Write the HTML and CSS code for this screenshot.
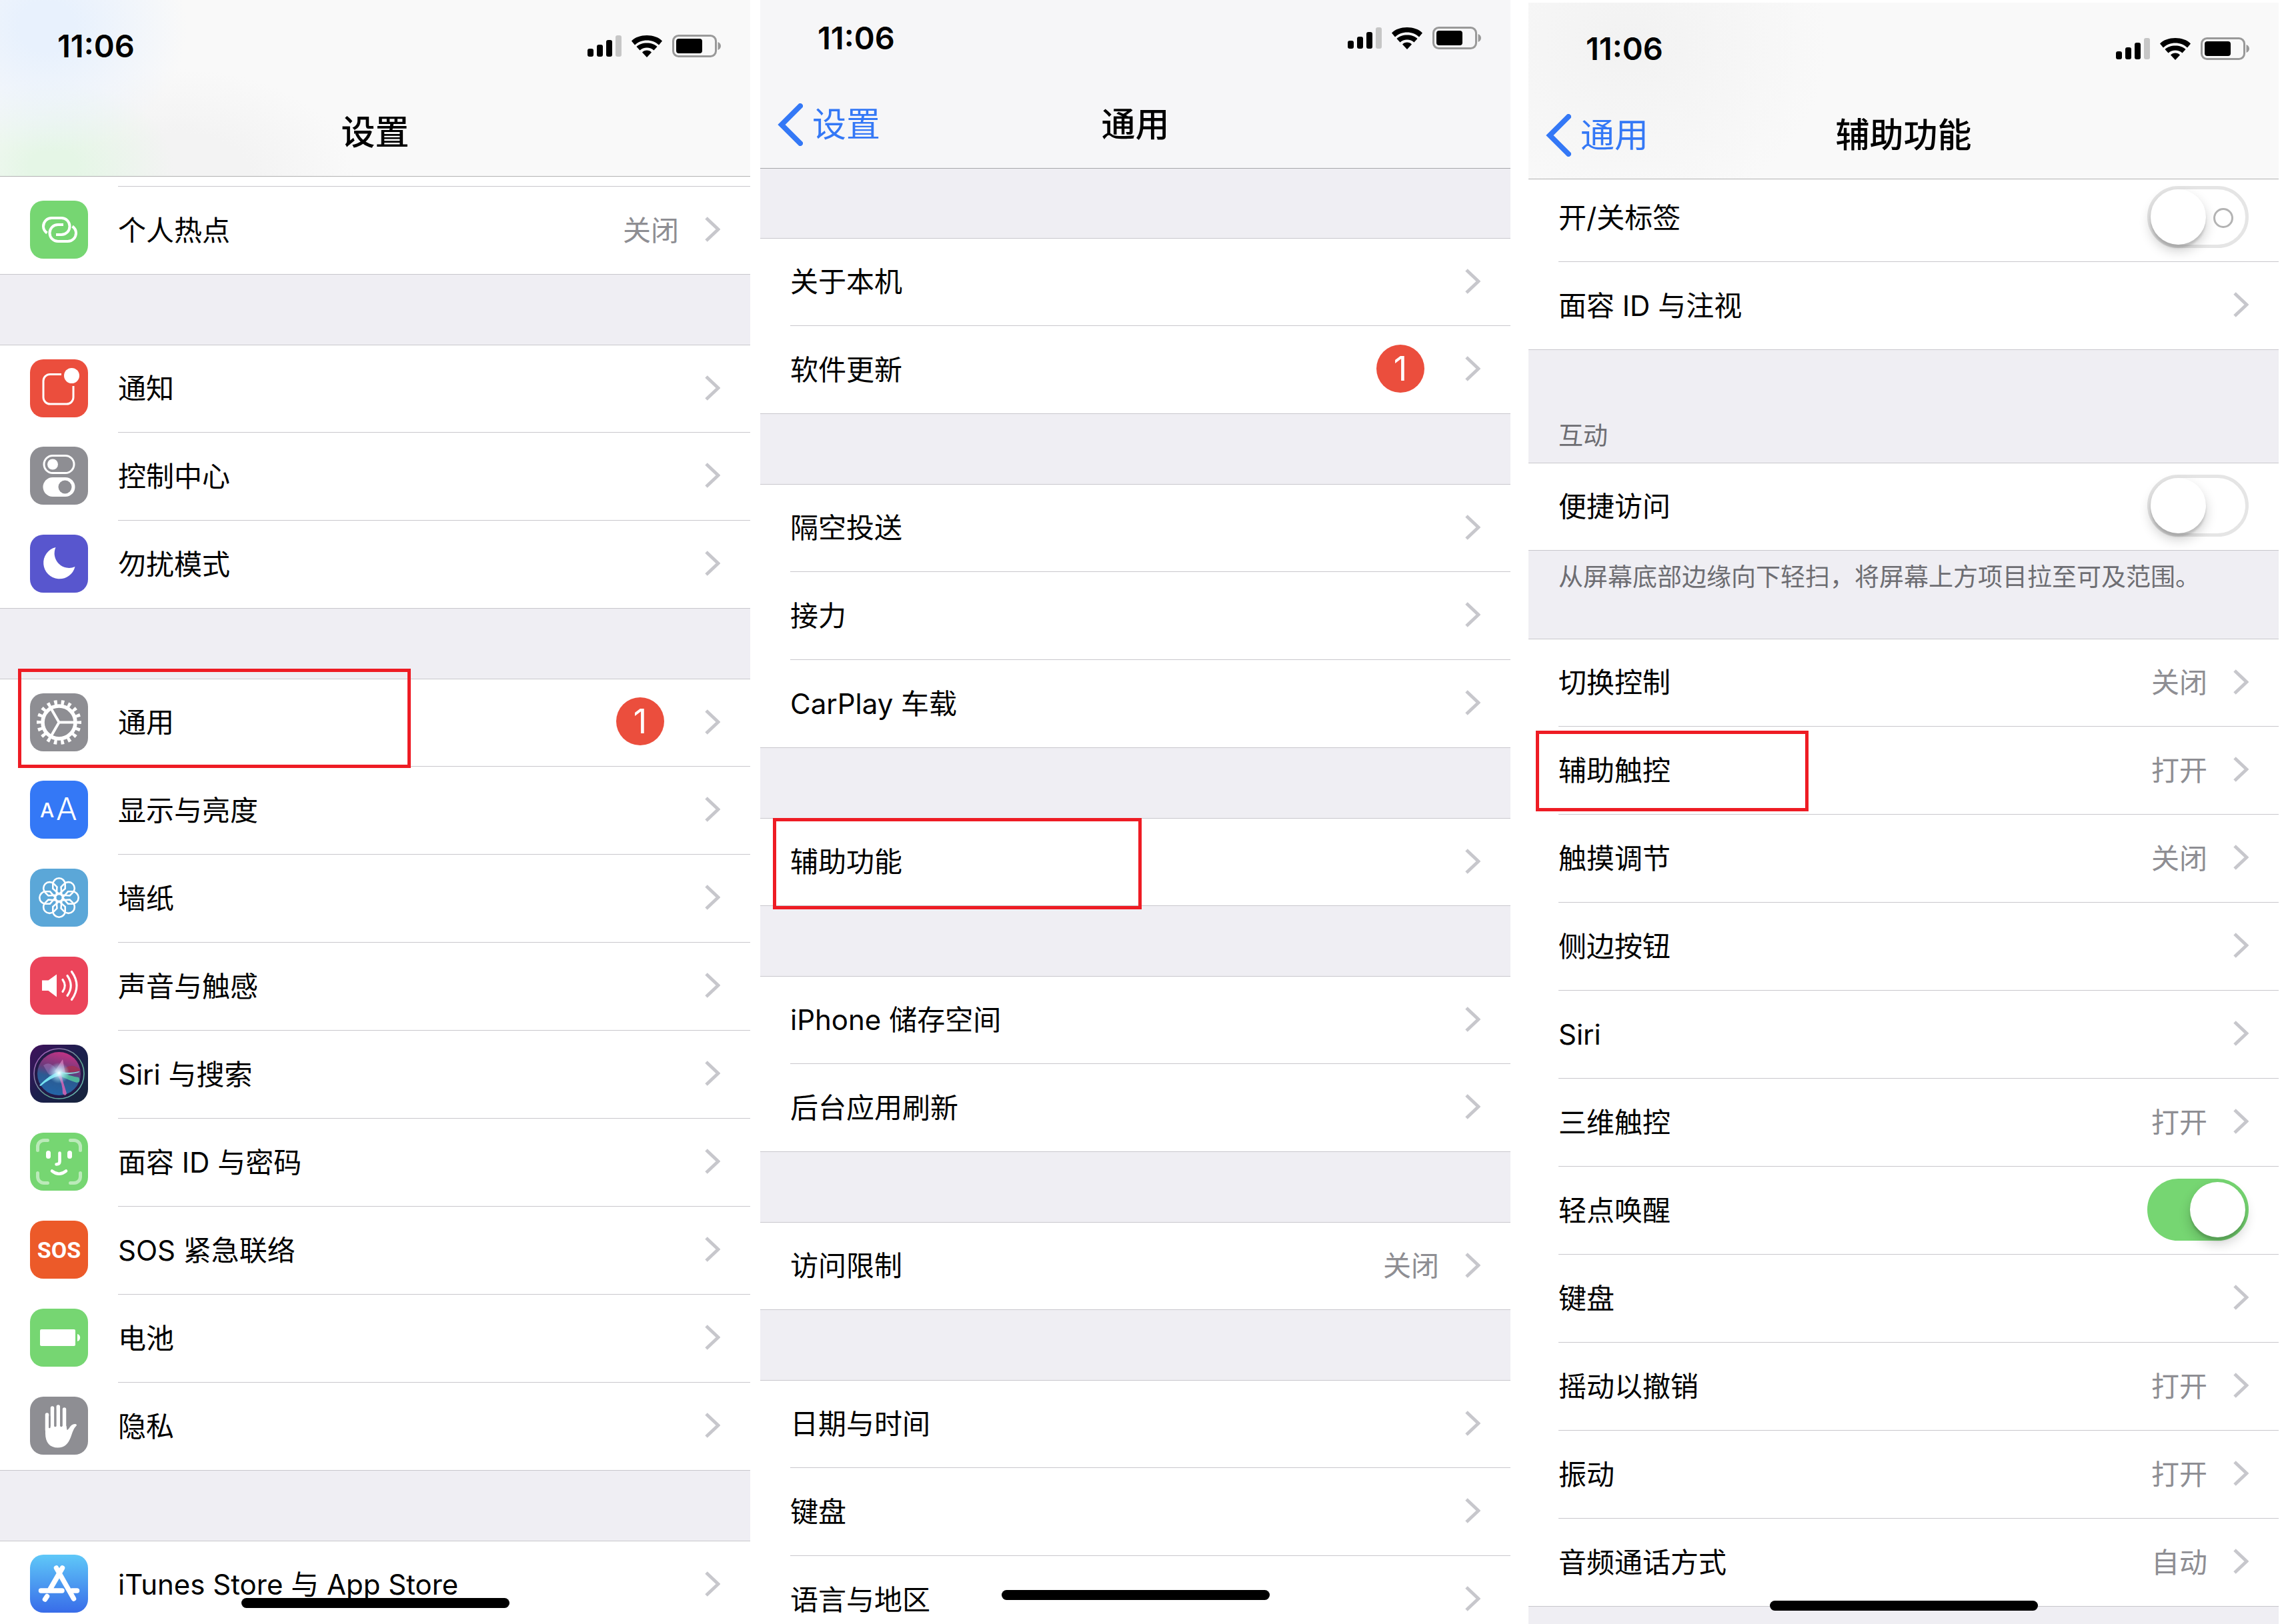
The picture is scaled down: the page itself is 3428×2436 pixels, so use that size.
FILE: index.html
```html
<!DOCTYPE html>
<html lang="zh-CN">
<head>
    <meta charset="UTF-8">
    <meta name="viewport" content="width=device-width, initial-scale=1.0">
    <title>设置 - 辅助触控</title>
    <link rel="stylesheet" href="styles.css">
</head>
<body>
    <!-- shared symbols -->
    <svg class="defs" aria-hidden="true">
        <symbol id="chevron" viewBox="0 0 24 38">
            <path d="M3 2l18 17L3 36" fill="none" stroke="#c7c7cc" stroke-width="5"/>
        </symbol>
        <symbol id="back" viewBox="0 0 38 64">
            <path d="M34 4L6 32l28 28" fill="none" stroke="#3478f6" stroke-width="8" stroke-linecap="round"/>
        </symbol>
        <symbol id="status" viewBox="0 0 200 34">
            <rect x="0" y="21" width="9" height="12" rx="3"/>
            <rect x="14" y="15" width="9" height="18" rx="3"/>
            <rect x="28" y="8" width="9" height="25" rx="3"/>
            <rect x="42" y="1" width="9" height="32" rx="3" fill="#c6c6c6"/>
            <path d="M66 9.500C76 -2 102 -2 112 9.500L107 15.500C98 6 80 6 71 15.500Z"/>
            <path d="M73.500 18C80 10.500 98 10.500 104.500 18L99.500 23.500C94 18 84 18 78.500 23.500Z"/>
            <path d="M82 26.500C85 22.500 93 22.500 96 26.500L89 34Z"/>
            <rect x="128.500" y="1.500" width="64" height="31" rx="8" fill="none" stroke="#999" stroke-width="3"/>
            <rect x="133" y="6" width="39" height="22" rx="4"/>
            <path d="M195.500 11c6 2 6 10 0 12z" fill="#999"/>
        </symbol>
    </svg>

    <main class="page">
        <!-- 设置 -->
        <section class="screen">
            <header class="nav nav-home">
                <div class="status"><span class="time">11:06</span><svg class="status-icons"><use href="#status"/></svg></div>
                <div class="title-bar"><h1>设置</h1></div>
            </header>
            <div class="group icons cut">
                <div class="row peek"><span class="body"></span></div>
                <a class="row" href="#">
                    <svg class="icon" viewBox="0 0 87 87"><rect width="87" height="87" rx="20" fill="#76d672"/>
                        <g fill="none" stroke="#fff" stroke-width="4">
                            <path id="loop" d="M25.500 48.500C22 46 20 42.500 20 38.500 20 31.500 25.500 26 32.500 26H47c7 0 12.500 5.500 12.500 12.500S54 51 47 51h-8"/>
                            <use href="#loop" transform="rotate(180 44.500 43.500)"/>
                        </g></svg>
                    <span class="body"><span class="label">个人热点</span><span class="value">关闭</span><svg class="chevron"><use href="#chevron"/></svg></span>
                </a>
            </div>
            <div class="group icons">
                <a class="row" href="#">
                    <svg class="icon" viewBox="0 0 87 87"><rect width="87" height="87" rx="20" fill="#eb4e3d"/>
                        <path d="M47 22.500H30a10 10 0 0 0-10 10V57a10 10 0 0 0 10 10h25a10 10 0 0 0 10-10V40" fill="none" stroke="#fff" stroke-width="3"/>
                        <circle cx="62.500" cy="24.500" r="11.500" fill="#fff"/></svg>
                    <span class="body"><span class="label">通知</span><svg class="chevron"><use href="#chevron"/></svg></span>
                </a>
                <a class="row" href="#">
                    <svg class="icon" viewBox="0 0 87 87"><rect width="87" height="87" rx="20" fill="#8e8e93"/>
                        <rect x="21" y="13.500" width="45" height="26" rx="13" fill="none" stroke="#fff" stroke-width="3"/>
                        <circle cx="34" cy="26.500" r="8" fill="#fff"/>
                        <rect x="19.500" y="46" width="48" height="29" rx="14.500" fill="#fff"/>
                        <circle cx="52.500" cy="60.500" r="10" fill="#8e8e93"/></svg>
                    <span class="body"><span class="label">控制中心</span><svg class="chevron"><use href="#chevron"/></svg></span>
                </a>
                <a class="row" href="#">
                    <svg class="icon" viewBox="0 0 87 87"><rect width="87" height="87" rx="20" fill="#5856ce"/>
                        <path d="M38.500 19A24 24 0 1 0 67.500 48A22 22 0 0 1 38.500 19Z" fill="#fff"/></svg>
                    <span class="body"><span class="label">勿扰模式</span><svg class="chevron"><use href="#chevron"/></svg></span>
                </a>
            </div>
            <div class="group icons">
                <a class="row" href="#">
                    <span class="mark mark-settings"></span>
                    <svg class="icon" viewBox="0 0 87 87"><rect width="87" height="87" rx="20" fill="#8e8e93"/>
                        <g fill="none" stroke="#fff">
                            <circle cx="43.500" cy="43.500" r="30" stroke-width="7" stroke-dasharray="4.600 5.872" stroke-dashoffset="2.300"/>
                            <circle cx="43.500" cy="43.500" r="24.500" stroke-width="5.600"/>
                            <path d="M43.500 43.500H67M43.500 43.500L31.700 23.100M43.500 43.500L31.700 63.900" stroke-width="4"/>
                        </g></svg>
                    <span class="body"><span class="label">通用</span><span class="badge">1</span><svg class="chevron"><use href="#chevron"/></svg></span>
                </a>
                <a class="row" href="#">
                    <svg class="icon" viewBox="0 0 87 87"><rect width="87" height="87" rx="20" fill="#3478f6"/>
                        <text class="small-a" x="15" y="55">A</text><text class="big-a" x="39" y="59">A</text></svg>
                    <span class="body"><span class="label">显示与亮度</span><svg class="chevron"><use href="#chevron"/></svg></span>
                </a>
                <a class="row" href="#">
                    <svg class="icon" viewBox="0 0 87 87"><rect width="87" height="87" rx="20" fill="#5ba7d8"/>
                        <g fill="none" stroke="#fff" stroke-width="2.600">
                            <path id="petal" d="M43.500 38L34.300 30V23.500a9.200 9.200 0 0 1 18.400 0V30Z"/>
                            <use href="#petal" transform="rotate(45 43.500 43.500)"/>
                            <use href="#petal" transform="rotate(90 43.500 43.500)"/>
                            <use href="#petal" transform="rotate(135 43.500 43.500)"/>
                            <use href="#petal" transform="rotate(180 43.500 43.500)"/>
                            <use href="#petal" transform="rotate(225 43.500 43.500)"/>
                            <use href="#petal" transform="rotate(270 43.500 43.500)"/>
                            <use href="#petal" transform="rotate(315 43.500 43.500)"/>
                            <circle cx="43.500" cy="43.500" r="5.500"/>
                        </g></svg>
                    <span class="body"><span class="label">墙纸</span><svg class="chevron"><use href="#chevron"/></svg></span>
                </a>
                <a class="row" href="#">
                    <svg class="icon" viewBox="0 0 87 87"><rect width="87" height="87" rx="20" fill="#eb445a"/>
                        <path d="M18 35.500h9.500L40 26.500v34L27.500 51H18z" fill="#fff"/>
                        <path d="M49 34.500q6.500 9 0 18M56 28.500q10.500 15 0 30M62.500 22.500q15 21 0 42" fill="none" stroke="#fff" stroke-width="3.200" stroke-linecap="round"/></svg>
                    <span class="body"><span class="label">声音与触感</span><svg class="chevron"><use href="#chevron"/></svg></span>
                </a>
                <a class="row" href="#">
                    <svg class="icon" viewBox="0 0 87 87">
                        <defs>
                            <linearGradient id="siriBg" x1="0" y1="0" x2="1" y2="1"><stop offset="0" stop-color="#40115c"/><stop offset=".5" stop-color="#1b1f4d"/><stop offset="1" stop-color="#16243a"/></linearGradient>
                            <linearGradient id="siriOrb" x1=".6" y1="0" x2=".35" y2="1"><stop offset="0" stop-color="#c23384"/><stop offset=".4" stop-color="#6b3b7c"/><stop offset=".6" stop-color="#2b5a92"/><stop offset="1" stop-color="#2366a8"/></linearGradient>
                            <linearGradient id="siriRim" x1="0" y1="0" x2="1" y2="1"><stop offset="0" stop-color="#b04fc0"/><stop offset=".6" stop-color="#5fa68f"/><stop offset="1" stop-color="#6fc5c0"/></linearGradient>
                            <radialGradient id="siriGlow"><stop offset="0" stop-color="#fff"/><stop offset=".3" stop-color="#c8f4ff" stop-opacity=".8"/><stop offset="1" stop-color="#8fdcf5" stop-opacity="0"/></radialGradient>
                        </defs>
                        <rect width="87" height="87" rx="20" fill="url(#siriBg)"/>
                        <circle cx="43.500" cy="43.500" r="37.500" fill="#231a48" stroke="url(#siriRim)" stroke-width="1.600"/>
                        <circle cx="43.500" cy="43.500" r="32.500" fill="url(#siriOrb)"/>
                        <path d="M43 43Q60 24 75 37Q77 41 43 43Z" fill="#a92f4c" opacity=".7"/>
                        <path d="M20 31Q32 22 43 43Q30 48 27 43Z" fill="#9d7dc0" opacity=".5"/>
                        <path d="M37 40L49 22L53 43L45 46Z" fill="#e894cf" opacity=".6"/>
                        <path d="M43 40Q58 44 74 40Q76 42 60 44Q50 45 43 44Z" fill="#8fe6e0" opacity=".9"/>
                        <path d="M43 40Q62 48 73 49Q77 56 70 57Q60 54 43 46Z" fill="#52c7a0" opacity=".85"/>
                        <path d="M46 43Q50 57 55 73Q53 79 49 73Q49 58 41 45Z" fill="#d863b4" opacity=".85"/>
                        <path d="M14 61Q29 45 45 40L46 46Q30 50 16 62Z" fill="#77e3f0"/>
                        <circle cx="43.500" cy="42.500" r="16" fill="url(#siriGlow)"/>
                    </svg>
                    <span class="body"><span class="label">Siri 与搜索</span><svg class="chevron"><use href="#chevron"/></svg></span>
                </a>
                <a class="row" href="#">
                    <svg class="icon" viewBox="0 0 87 87"><rect width="87" height="87" rx="20" fill="#76d672"/>
                        <path d="M26.500 11.500H21a9.500 9.500 0 0 0-9.500 9.500v5.500M60.500 11.500H66a9.500 9.500 0 0 1 9.500 9.500v5.500M26.500 75.500H21a9.500 9.500 0 0 1-9.500-9.500v-5.500M60.500 75.500H66a9.500 9.500 0 0 0 9.500-9.500v-5.500" fill="none" stroke="#bbeab9" stroke-width="5" stroke-linecap="round"/>
                        <g fill="none" stroke="#fff" stroke-linecap="round">
                            <path d="M27.500 30.500v5M59.500 30.500v5" stroke-width="7"/>
                            <path d="M44.500 30.500V43q0 4.500-5 4.500M33 57.500q10.500 8.500 21 0" stroke-width="4.600"/>
                        </g></svg>
                    <span class="body"><span class="label">面容 ID 与密码</span><svg class="chevron"><use href="#chevron"/></svg></span>
                </a>
                <a class="row" href="#">
                    <svg class="icon" viewBox="0 0 87 87"><rect width="87" height="87" rx="20" fill="#ec5a29"/>
                        <text class="sos" x="43.500" y="56" text-anchor="middle">SOS</text></svg>
                    <span class="body"><span class="label">SOS 紧急联络</span><svg class="chevron"><use href="#chevron"/></svg></span>
                </a>
                <a class="row" href="#">
                    <svg class="icon" viewBox="0 0 87 87"><rect width="87" height="87" rx="20" fill="#76d672"/>
                        <rect x="15" y="31" width="53" height="25" rx="2" fill="#fff"/>
                        <path d="M71 38c5.500 1 5.500 10 0 11z" fill="#fff"/></svg>
                    <span class="body"><span class="label">电池</span><svg class="chevron"><use href="#chevron"/></svg></span>
                </a>
                <a class="row" href="#">
                    <svg class="icon" viewBox="0 0 87 87"><rect width="87" height="87" rx="20" fill="#8e8e93"/>
                        <path d="M23 45V55C23 69 30 76.500 41.500 76.500C52 76.500 57 71 61 61C64 53 65 48 70 43C70 40 64 40.500 61.500 43.500C59 46 57.500 50 55.500 50L54.500 44Z" fill="#fff"/>
                        <path d="M25.500 27v23M33.500 17v33M42.300 15v35M51.500 19v31" stroke="#fff" stroke-width="5.500" stroke-linecap="round"/>
                        <path d="M29.300 30v16M37.900 20v24M46.900 20v24" stroke="#8e8e93" stroke-width="2.600" stroke-linecap="round"/></svg>
                    <span class="body"><span class="label">隐私</span><svg class="chevron"><use href="#chevron"/></svg></span>
                </a>
            </div>
            <div class="group icons">
                <a class="row" href="#">
                    <svg class="icon" viewBox="0 0 87 87">
                        <defs><linearGradient id="store" x1="0" y1="0" x2="0" y2="1"><stop offset="0" stop-color="#5fc8f8"/><stop offset="1" stop-color="#386ce9"/></linearGradient></defs>
                        <rect width="87" height="87" rx="20" fill="url(#store)"/>
                        <g stroke="#fff" stroke-width="7.500" stroke-linecap="round">
                            <path d="M39.500 20L65.500 66M48.500 20L30 52M16.500 54H48M63 54h7.500M25.500 62.500l-3 4.500"/>
                        </g></svg>
                    <span class="body"><span class="label">iTunes Store 与 App Store</span><svg class="chevron"><use href="#chevron"/></svg></span>
                </a>
            </div>
            <span class="home-bar"></span>
        </section>

        <!-- 通用 -->
        <section class="screen screen-general">
            <header class="nav nav-general">
                <div class="status"><span class="time">11:06</span><svg class="status-icons"><use href="#status"/></svg></div>
                <div class="title-bar"><a class="back" href="#"><svg class="back-icon"><use href="#back"/></svg>设置</a><h1>通用</h1></div>
            </header>
            <div class="group">
                <a class="row" href="#"><span class="body"><span class="label">关于本机</span><svg class="chevron"><use href="#chevron"/></svg></span></a>
                <a class="row" href="#"><span class="body"><span class="label">软件更新</span><span class="badge">1</span><svg class="chevron"><use href="#chevron"/></svg></span></a>
            </div>
            <div class="group">
                <a class="row" href="#"><span class="body"><span class="label">隔空投送</span><svg class="chevron"><use href="#chevron"/></svg></span></a>
                <a class="row" href="#"><span class="body"><span class="label">接力</span><svg class="chevron"><use href="#chevron"/></svg></span></a>
                <a class="row" href="#"><span class="body"><span class="label">CarPlay 车载</span><svg class="chevron"><use href="#chevron"/></svg></span></a>
            </div>
            <div class="group">
                <a class="row" href="#"><span class="mark mark-general"></span><span class="body"><span class="label">辅助功能</span><svg class="chevron"><use href="#chevron"/></svg></span></a>
            </div>
            <div class="group">
                <a class="row" href="#"><span class="body"><span class="label">iPhone 储存空间</span><svg class="chevron"><use href="#chevron"/></svg></span></a>
                <a class="row" href="#"><span class="body"><span class="label">后台应用刷新</span><svg class="chevron"><use href="#chevron"/></svg></span></a>
            </div>
            <div class="group">
                <a class="row" href="#"><span class="body"><span class="label">访问限制</span><span class="value">关闭</span><svg class="chevron"><use href="#chevron"/></svg></span></a>
            </div>
            <div class="group">
                <a class="row" href="#"><span class="body"><span class="label">日期与时间</span><svg class="chevron"><use href="#chevron"/></svg></span></a>
                <a class="row" href="#"><span class="body"><span class="label">键盘</span><svg class="chevron"><use href="#chevron"/></svg></span></a>
                <a class="row" href="#"><span class="body"><span class="label">语言与地区</span><svg class="chevron"><use href="#chevron"/></svg></span></a>
            </div>
            <span class="home-bar"></span>
        </section>

        <!-- 辅助功能 -->
        <section class="screen screen-access">
            <header class="nav nav-access">
                <div class="status"><span class="time">11:06</span><svg class="status-icons"><use href="#status"/></svg></div>
                <div class="title-bar"><a class="back" href="#"><svg class="back-icon"><use href="#back"/></svg>通用</a><h1>辅助功能</h1></div>
            </header>
            <div class="group cut scrolled">
                <label class="row"><span class="body"><span class="label">开/关标签</span><input class="switch labelled" type="checkbox"></span></label>
                <a class="row" href="#"><span class="body"><span class="label">面容 ID 与注视</span><svg class="chevron"><use href="#chevron"/></svg></span></a>
            </div>
            <h2 class="group-title">互动</h2>
            <div class="group titled">
                <label class="row"><span class="body"><span class="label">便捷访问</span><input class="switch" type="checkbox"></span></label>
            </div>
            <p class="group-note">从屏幕底部边缘向下轻扫，将屏幕上方项目拉至可及范围。</p>
            <div class="group titled">
                <a class="row" href="#"><span class="body"><span class="label">切换控制</span><span class="value">关闭</span><svg class="chevron"><use href="#chevron"/></svg></span></a>
                <a class="row" href="#"><span class="mark mark-touch"></span><span class="body"><span class="label">辅助触控</span><span class="value">打开</span><svg class="chevron"><use href="#chevron"/></svg></span></a>
                <a class="row" href="#"><span class="body"><span class="label">触摸调节</span><span class="value">关闭</span><svg class="chevron"><use href="#chevron"/></svg></span></a>
                <a class="row" href="#"><span class="body"><span class="label">侧边按钮</span><svg class="chevron"><use href="#chevron"/></svg></span></a>
                <a class="row" href="#"><span class="body"><span class="label">Siri</span><svg class="chevron"><use href="#chevron"/></svg></span></a>
                <a class="row" href="#"><span class="body"><span class="label">三维触控</span><span class="value">打开</span><svg class="chevron"><use href="#chevron"/></svg></span></a>
                <label class="row"><span class="body"><span class="label">轻点唤醒</span><input class="switch" type="checkbox" checked></span></label>
                <a class="row" href="#"><span class="body"><span class="label">键盘</span><svg class="chevron"><use href="#chevron"/></svg></span></a>
                <a class="row" href="#"><span class="body"><span class="label">摇动以撤销</span><span class="value">打开</span><svg class="chevron"><use href="#chevron"/></svg></span></a>
                <a class="row" href="#"><span class="body"><span class="label">振动</span><span class="value">打开</span><svg class="chevron"><use href="#chevron"/></svg></span></a>
                <a class="row" href="#"><span class="body"><span class="label">音频通话方式</span><span class="value">自动</span><svg class="chevron"><use href="#chevron"/></svg></span></a>
            </div>
            <span class="home-bar"></span>
        </section>
    </main>
</body>
</html>
```

FILE: styles.css
```css
* {
    box-sizing: border-box;
}
body {
    margin: 0;
    background: #fff;
    color: #000;
    font-family: Inter, "Noto Sans CJK SC", sans-serif;
    font-size: 42px;
    line-height: 60px;
}
a {
    color: inherit;
    text-decoration: none;
}
.defs {
    position: absolute;
    width: 0;
    height: 0;
}
.page {
    display: flex;
    align-items: flex-start;
    height: 100vh;
    padding-right: 11px;
    overflow: hidden;
}
.screen {
    position: relative;
    flex: 1;
    height: 100vh;
    overflow: hidden;
    background: #efeef3;
}
.screen-general {
    margin: -12px 0 0 15px;
}
.screen-access {
    margin: 4px 0 0 27px;
}

/* navigation bar */
.nav {
    position: relative;
    z-index: 1;
    height: 265px;
    margin-bottom: -1px;
    border-bottom: 1px solid #b2b2b2;
    background: #f9f9f9;
}
.nav-home {
    background:
        radial-gradient(ellipse 210px 190px at 70px 40px, #e8f1fd 20%, rgba(232, 241, 253, 0)),
        radial-gradient(ellipse 180px 130px at 80px 250px, #e5f6e6 20%, rgba(229, 246, 230, 0)),
        radial-gradient(ellipse 260px 160px at 270px 264px, #f3f3f3 40%, rgba(243, 243, 243, 0)),
        #f9f9f9;
}
.nav-general {
    background: #f6f6f8;
    border-color: #a7a7aa;
}
.nav-access {
    background:
        radial-gradient(ellipse 300px 260px at 150px 60px, #f2f2f2, rgba(249, 249, 249, 0)),
        #f9f9f9;
}
.status {
    display: flex;
    justify-content: space-between;
    align-items: center;
    height: 132px;
    padding: 6px 44px 0 86px;
}
.time {
    font-size: 47px;
    font-weight: 600;
}
.status-icons {
    width: 200px;
    height: 34px;
}
.title-bar {
    display: flex;
    align-items: center;
    position: relative;
    height: 132px;
    padding-top: 2px;
}
.title-bar h1 {
    flex: 1;
    margin: 0;
    font-size: 51px;
    font-weight: 500;
    text-align: center;
}
.back {
    position: absolute;
    left: 26px;
    display: flex;
    align-items: center;
    gap: 14px;
    color: #3478f6;
    font-size: 51px;
}
.back-icon {
    width: 38px;
    height: 64px;
}

/* grouped lists */
.group {
    margin-top: 105px;
    background: #fff;
}
.group.cut,
.group.titled {
    margin-top: 0;
}
.group.scrolled {
    margin-top: -8px;
}
.row {
    position: relative;
    display: flex;
    align-items: center;
    gap: 45px;
    height: 132px;
    padding-left: 45px;
}
.row:first-child {
    border-top: 1px solid #c8c7cc;
}
.row:last-child {
    border-bottom: 1px solid #c8c7cc;
}
.cut .row:first-child {
    border-top: none;
}
.peek {
    height: 16px;
    padding-left: 177px;
}
.body {
    flex: 1;
    display: flex;
    align-items: center;
    height: 100%;
    padding-right: 45px;
    border-bottom: 1px solid #c8c7cc;
}
.row:last-child .body {
    border-bottom: none;
}
.icon {
    width: 87px;
    height: 87px;
    margin-bottom: 3px;
}
.label {
    flex: 1;
}
.value {
    margin-right: 38px;
    color: #8e8e93;
}
.chevron {
    width: 24px;
    height: 38px;
    margin-bottom: 3px;
}
.badge {
    width: 72px;
    height: 72px;
    margin: 0 60px 4px 0;
    border-radius: 50%;
    background: #eb4e3d;
    color: #fff;
    font-size: 50px;
    line-height: 72px;
    text-align: center;
}
.group-title {
    height: 169px;
    margin: 0;
    padding: 99px 45px 0;
    color: #6d6d72;
    font-size: 37px;
    font-weight: 400;
}
.group-note {
    height: 132px;
    margin: 0;
    padding: 10px 45px 0;
    color: #6d6d72;
    font-size: 37px;
}

/* switches */
.switch {
    appearance: none;
    position: relative;
    width: 152px;
    height: 93px;
    margin: 0 0 3px;
    border: 5px solid #e5e5e5;
    border-radius: 47px;
    background: #fff;
}
.switch::before {
    content: "";
    position: absolute;
    top: 0;
    left: 0;
    width: 83px;
    height: 83px;
    border-radius: 50%;
    background: #fff;
    box-shadow: 0 9px 18px rgba(0, 0, 0, 0.2), 0 5px 3px rgba(0, 0, 0, 0.12);
}
.switch.labelled::after {
    content: "";
    position: absolute;
    top: 28px;
    right: 18px;
    width: 24px;
    height: 24px;
    border: 3px solid #b3b3b3;
    border-radius: 50%;
}
.switch:checked {
    border-color: #76d672;
    background: #76d672;
}
.switch:checked::before {
    left: auto;
    right: 0;
}

/* red highlight frames */
.mark {
    position: absolute;
    z-index: 1;
    border: 5px solid #ee1c24;
}
.mark-settings {
    top: -16px;
    left: 27px;
    width: 589px;
    height: 149px;
}
.mark-general {
    top: -1px;
    left: 19px;
    width: 553px;
    height: 137px;
}
.mark-touch {
    top: 6px;
    left: 11px;
    width: 409px;
    height: 121px;
}
.home-bar {
    position: absolute;
    bottom: 24px;
    left: 50%;
    width: 402px;
    height: 15px;
    margin-left: -201px;
    border-radius: 8px;
    background: #000;
}

/* lettering inside icons */
.small-a,
.big-a,
.sos {
    fill: #fff;
}
.small-a {
    font-size: 30px;
    font-weight: 500;
}
.big-a {
    font-size: 47px;
    font-weight: 300;
}
.sos {
    font-family: "Liberation Sans Narrow", Roboto, sans-serif;
    font-size: 34px;
    font-weight: 700;
}
```
